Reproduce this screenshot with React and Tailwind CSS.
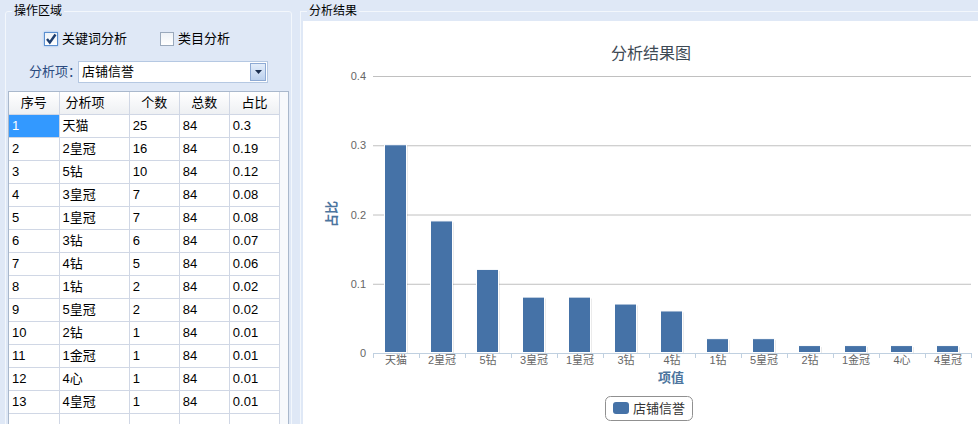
import React from "react";

const rows = [
  ["1", "天猫", "25", "84", "0.3"],
  ["2", "2皇冠", "16", "84", "0.19"],
  ["3", "5钻", "10", "84", "0.12"],
  ["4", "3皇冠", "7", "84", "0.08"],
  ["5", "1皇冠", "7", "84", "0.08"],
  ["6", "3钻", "6", "84", "0.07"],
  ["7", "4钻", "5", "84", "0.06"],
  ["8", "1钻", "2", "84", "0.02"],
  ["9", "5皇冠", "2", "84", "0.02"],
  ["10", "2钻", "1", "84", "0.01"],
  ["11", "1金冠", "1", "84", "0.01"],
  ["12", "4心", "1", "84", "0.01"],
  ["13", "4皇冠", "1", "84", "0.01"],
];

const font = { fontFamily: '"Liberation Sans", "Noto Sans CJK SC", sans-serif' };

function Checkbox({ checked, label }) {
  return (
    <label className="flex items-center gap-[4px] text-[13px] text-black whitespace-nowrap">
      <span
        className={
          "w-[14px] h-[14px] border flex items-center justify-center bg-gradient-to-b from-[#eef2f7] to-[#ffffff] " +
          (checked ? "border-[#5b8fd0] shadow-[0_0_2px_#8fb6e8]" : "border-[#9aa9bc]")
        }
      >
        {checked && (
          <svg width="12" height="12" viewBox="0 0 12 12">
            <path d="M2 6 L4.8 9.5 L10.5 1.5" fill="none" stroke="#1d3d6e" strokeWidth="2.4" />
          </svg>
        )}
      </span>
      {label}
    </label>
  );
}

function Chart() {
  const x0 = 70;
  const y0 = 332;
  const step = 69.25;
  const cw = 46;
  const ticks = [0, 0.1, 0.2, 0.3, 0.4];
  return (
    <svg width="676" height="403" style={font}>
      <text x="348" y="38" textAnchor="middle" fontSize="16" fill="#3e4a55">
        分析结果图
      </text>
      {ticks.map((t, i) => (
        <g key={t}>
          {i > 0 && <line x1={x0} x2="668" y1={y0 - i * step + 0.5} y2={y0 - i * step + 0.5} stroke="#c0c0c0" />}
          <text x="63" y={y0 - i * step + 4} textAnchor="end" fontSize="11" fill="#666">
            {t === 0 ? "0" : String(t)}
          </text>
        </g>
      ))}
      {rows.map((r, i) => {
        const h = parseFloat(r[4]) * step * 10;
        const cx = x0 + cw * i + cw / 2;
        return (
          <g key={r[0]}>
            <rect x={cx - 10} y={y0 - h + 1} width="22" height={h} fill="#000" opacity="0.08" />
            <rect x={cx - 11.5} y={y0 - h - 0.5} width="22" height={h} fill="#4572a7" stroke="#fff" />
            <text x={cx} y="343" textAnchor="middle" fontSize="11" fill="#666">
              {r[1]}
            </text>
          </g>
        );
      })}
      <line x1={x0} x2="668" y1={y0 + 0.5} y2={y0 + 0.5} stroke="#c0d0e0" />
      {Array.from({ length: 14 }).map((_, i) => (
        <line key={i} x1={x0 + cw * i + 0.5} x2={x0 + cw * i + 0.5} y1={y0} y2={y0 + 5} stroke="#c0d0e0" />
      ))}
      <text x="368" y="361" textAnchor="middle" fontSize="13" fontWeight="bold" fill="#4d759e">
        项值
      </text>
      <text x="0" y="0" transform="translate(33 193) rotate(-90)" textAnchor="middle" fontSize="13" fontWeight="bold" fill="#4d759e">
        占比
      </text>
      <rect x="302.5" y="375.5" width="87" height="24" rx="5" fill="#fff" stroke="#909090" />
      <rect x="310" y="381" width="16" height="12" rx="3" fill="#4572a7" />
      <text x="330" y="392" fontSize="13" fill="#333">
        店铺信誉
      </text>
    </svg>
  );
}

export default function App() {
  return (
    <div className="w-[978px] h-[424px] bg-[#dfe8f6] flex overflow-hidden" style={font}>
      <div className="w-[300px] shrink-0 pl-[5px] pr-[8px]">
        <fieldset className="h-[440px] border border-[#f3f7fc] rounded-[3px] mt-[4px] pl-[2px]">
          <legend className="ml-[4px] px-[2px] text-[12px] leading-[14px] text-black">操作区域</legend>
          <div className="flex items-center gap-[33px] pl-[36px] mt-[13px] h-[16px]">
            <Checkbox checked label="关键词分析" />
            <Checkbox label="类目分析" />
          </div>
          <div className="flex items-center mt-[14px] pl-[21px] h-[22px]">
            <span className="shrink-0 whitespace-nowrap text-[13px] text-[#2b4b80] w-[49px]">分析项：</span>
            <div className="shrink-0 w-[190px] h-[22px] bg-white border border-[#b5c8e2] flex items-center justify-between pl-[3px] pr-[1px]">
              <span className="text-[13px] text-black">店铺信誉</span>
              <span className="w-[16px] h-[18px] border border-[#8eaad4] bg-gradient-to-b from-[#e3edfa] to-[#bcd1ee] flex items-center justify-center">
                <svg width="7" height="4" viewBox="0 0 7 4">
                  <path d="M0 0 L7 0 L3.5 4 Z" fill="#1b2f50" />
                </svg>
              </span>
            </div>
          </div>
          <div className="mt-[8px] w-[281px] h-[340px] border border-[#a9b8cc] bg-[#f7f9fc] overflow-hidden">
            <table className="border-collapse text-[13px] text-black bg-white" style={{ width: 271 }}>
              <thead>
                <tr className="h-[22px] bg-gradient-to-b from-[#ffffff] to-[#eef0f3]">
                  <th className="w-[50px] font-normal text-center border-r border-b border-[#d0d7e5]">序号</th>
                  <th className="w-[70px] font-normal text-left pl-[6px] border-r border-b border-[#d0d7e5]">分析项</th>
                  <th className="w-[50px] font-normal text-center border-r border-b border-[#d0d7e5]">个数</th>
                  <th className="w-[50px] font-normal text-center border-r border-b border-[#d0d7e5]">总数</th>
                  <th className="w-[50px] font-normal text-center border-r border-b border-[#d0d7e5]">占比</th>
                </tr>
              </thead>
              <tbody>
                {rows.map((r, i) => (
                  <tr key={r[0]} className="h-[23px]">
                    {r.map((c, j) => (
                      <td
                        key={j}
                        className={
                          "pl-[3px] border-r border-b border-[#d0d7e5] " +
                          (i === 0 && j === 0 ? "bg-[#3399ff] text-white" : "")
                        }
                      >
                        {c}
                      </td>
                    ))}
                  </tr>
                ))}
                <tr className="h-[23px]">
                  {[0, 1, 2, 3, 4].map((j) => (
                    <td key={j} className="border-r border-b border-[#d0d7e5]"></td>
                  ))}
                </tr>
              </tbody>
            </table>
          </div>
        </fieldset>
      </div>
      <div className="flex-1 flex flex-col">
        <fieldset className="flex-1 border-l border-t border-[#f3f7fc] mt-[4px] flex flex-col">
          <legend className="ml-[6px] px-[2px] text-[12px] leading-[14px] text-black">分析结果</legend>
          <div className="mt-[3px] ml-[2px] flex-1 bg-white">
            <Chart />
          </div>
        </fieldset>
      </div>
    </div>
  );
}
